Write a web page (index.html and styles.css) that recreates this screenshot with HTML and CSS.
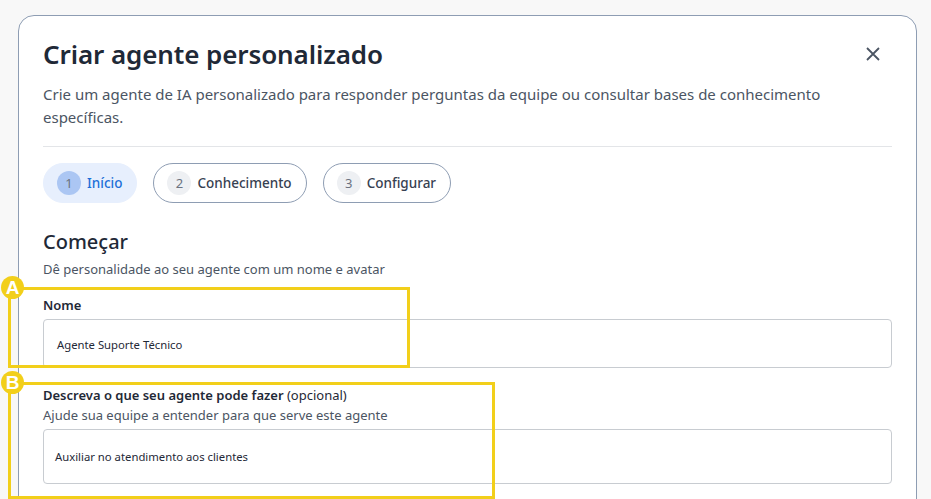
FILE: index.html
```html
<!DOCTYPE html>
<html lang="pt">
<head>
    <meta charset="UTF-8">
    <meta name="viewport" content="width=device-width, initial-scale=1.0">
    <title>Criar agente personalizado</title>
    <link rel="stylesheet" href="styles.css">
</head>
<body>
    <div class="modal">
        <div class="modal-header">
            <h1>Criar agente personalizado</h1>
            <button class="close" aria-label="Fechar">
                <svg width="16" height="16" viewBox="0 0 16 16"><path d="M2 2L14 14M14 2L2 14" stroke="#4b5563" stroke-width="1.8" fill="none"/></svg>
            </button>
        </div>
        <p class="intro">Crie um agente de IA personalizado para responder perguntas da equipe ou consultar bases de conhecimento específicas.</p>
        <hr class="divider">

        <div class="steps">
            <div class="step active"><span class="num">1</span>Início</div>
            <div class="step"><span class="num">2</span>Conhecimento</div>
            <div class="step"><span class="num">3</span>Configurar</div>
        </div>

        <h2>Começar</h2>
        <p class="hint">Dê personalidade ao seu agente com um nome e avatar</p>

        <div class="field field-name">
            <label>Nome</label>
            <div class="input">Agente Suporte Técnico</div>
        </div>

        <div class="field field-desc">
            <label>Descreva o que seu agente pode fazer <span class="opt">(opcional)</span></label>
            <p class="help">Ajude sua equipe a entender para que serve este agente</p>
            <div class="input textarea">Auxiliar no atendimento aos clientes</div>
        </div>
    </div>

    <!-- annotation marks -->
    <div class="mark mark-a"><span class="badge">A</span></div>
    <div class="mark mark-b"><span class="badge">B</span></div>
</body>
</html>
```

FILE: styles.css
```css
body {
    margin: 0;
    padding: 15px 14px 0 18px;
    background-color: #f8f8f8;
    font-family: "Noto Sans", "Open Sans", sans-serif;
    color: #1f2937;
    height: 499px;
    overflow: hidden;
    box-sizing: border-box;
}
.modal {
    background-color: #fff;
    border: 1px solid #8e9db3;
    border-radius: 16px;
    padding: 19px 24px 40px 24px;
    min-height: 520px;
}
.modal-header {
    display: flex;
    justify-content: space-between;
    align-items: center;
}
h1 {
    margin: 0;
    font-size: 26px;
    font-weight: 600;
    color: #1f2937;
    line-height: 38px;
    letter-spacing: -0.1px;
}
.close {
    background: none;
    border: none;
    padding: 0;
    margin-right: 11px;
    width: 16px;
    height: 16px;
    display: flex;
}
.intro {
    margin: 10px 0 0;
    font-size: 15px;
    line-height: 23px;
    color: #4b5563;
    max-width: 800px;
}
.divider {
    border: none;
    border-top: 1px solid #e3e5e8;
    margin: 17px 0 16px;
}
.steps {
    display: flex;
    gap: 16px;
}
.step {
    display: flex;
    align-items: center;
    gap: 6px;
    height: 40px;
    box-sizing: border-box;
    padding: 0 14px 0 13px;
    border: 1px solid #8e9db3;
    border-radius: 20px;
    font-size: 13.5px;
    font-weight: 500;
    color: #374151;
}
.step.active {
    background-color: #e7effd;
    border-color: #e7effd;
    color: #1d6fd8;
}
.num {
    width: 24px;
    height: 24px;
    border-radius: 50%;
    background-color: #eef0f3;
    color: #6b7280;
    font-size: 13px;
    font-weight: 400;
    display: flex;
    align-items: center;
    justify-content: center;
}
.step.active .num {
    background-color: #abc6f3;
}
h2 {
    margin: 26px 0 0;
    font-size: 20px;
    font-weight: 500;
    line-height: 26px;
    color: #1f2937;
}
.hint {
    margin: 5px 0 0;
    font-size: 13px;
    color: #4b5563;
    line-height: 18px;
}
.field {
    margin-top: 18px;
}
.field label {
    display: block;
    font-size: 13px;
    font-weight: 600;
    color: #1f2937;
    line-height: 18px;
}
.field .opt {
    font-weight: 400;
}
.help {
    margin: 2px 0 0;
    font-size: 13px;
    color: #4b5563;
    line-height: 18px;
}
.input {
    margin-top: 5px;
    height: 49px;
    box-sizing: border-box;
    border: 1px solid #c8ccd1;
    border-radius: 4px;
    padding: 1px 13px 0;
    display: flex;
    align-items: center;
    font-size: 11.3px;
    color: #1f2937;
}
.textarea {
    height: 55px;
    padding: 0 11px;
}
.mark {
    position: absolute;
    border: 3px solid #f2cf1a;
    box-sizing: border-box;
}
.mark-a {
    left: 8px;
    top: 287px;
    width: 402px;
    height: 81px;
}
.mark-b {
    left: 8px;
    top: 382px;
    width: 487px;
    height: 117px;
}
.badge {
    position: absolute;
    left: -10px;
    top: -14px;
    width: 23px;
    height: 23px;
    border-radius: 50%;
    background-color: #f2cf1a;
    color: #fff;
    font-family: "Liberation Sans", sans-serif;
    font-weight: 700;
    font-size: 19px;
    display: flex;
    align-items: center;
    justify-content: center;
}
```
